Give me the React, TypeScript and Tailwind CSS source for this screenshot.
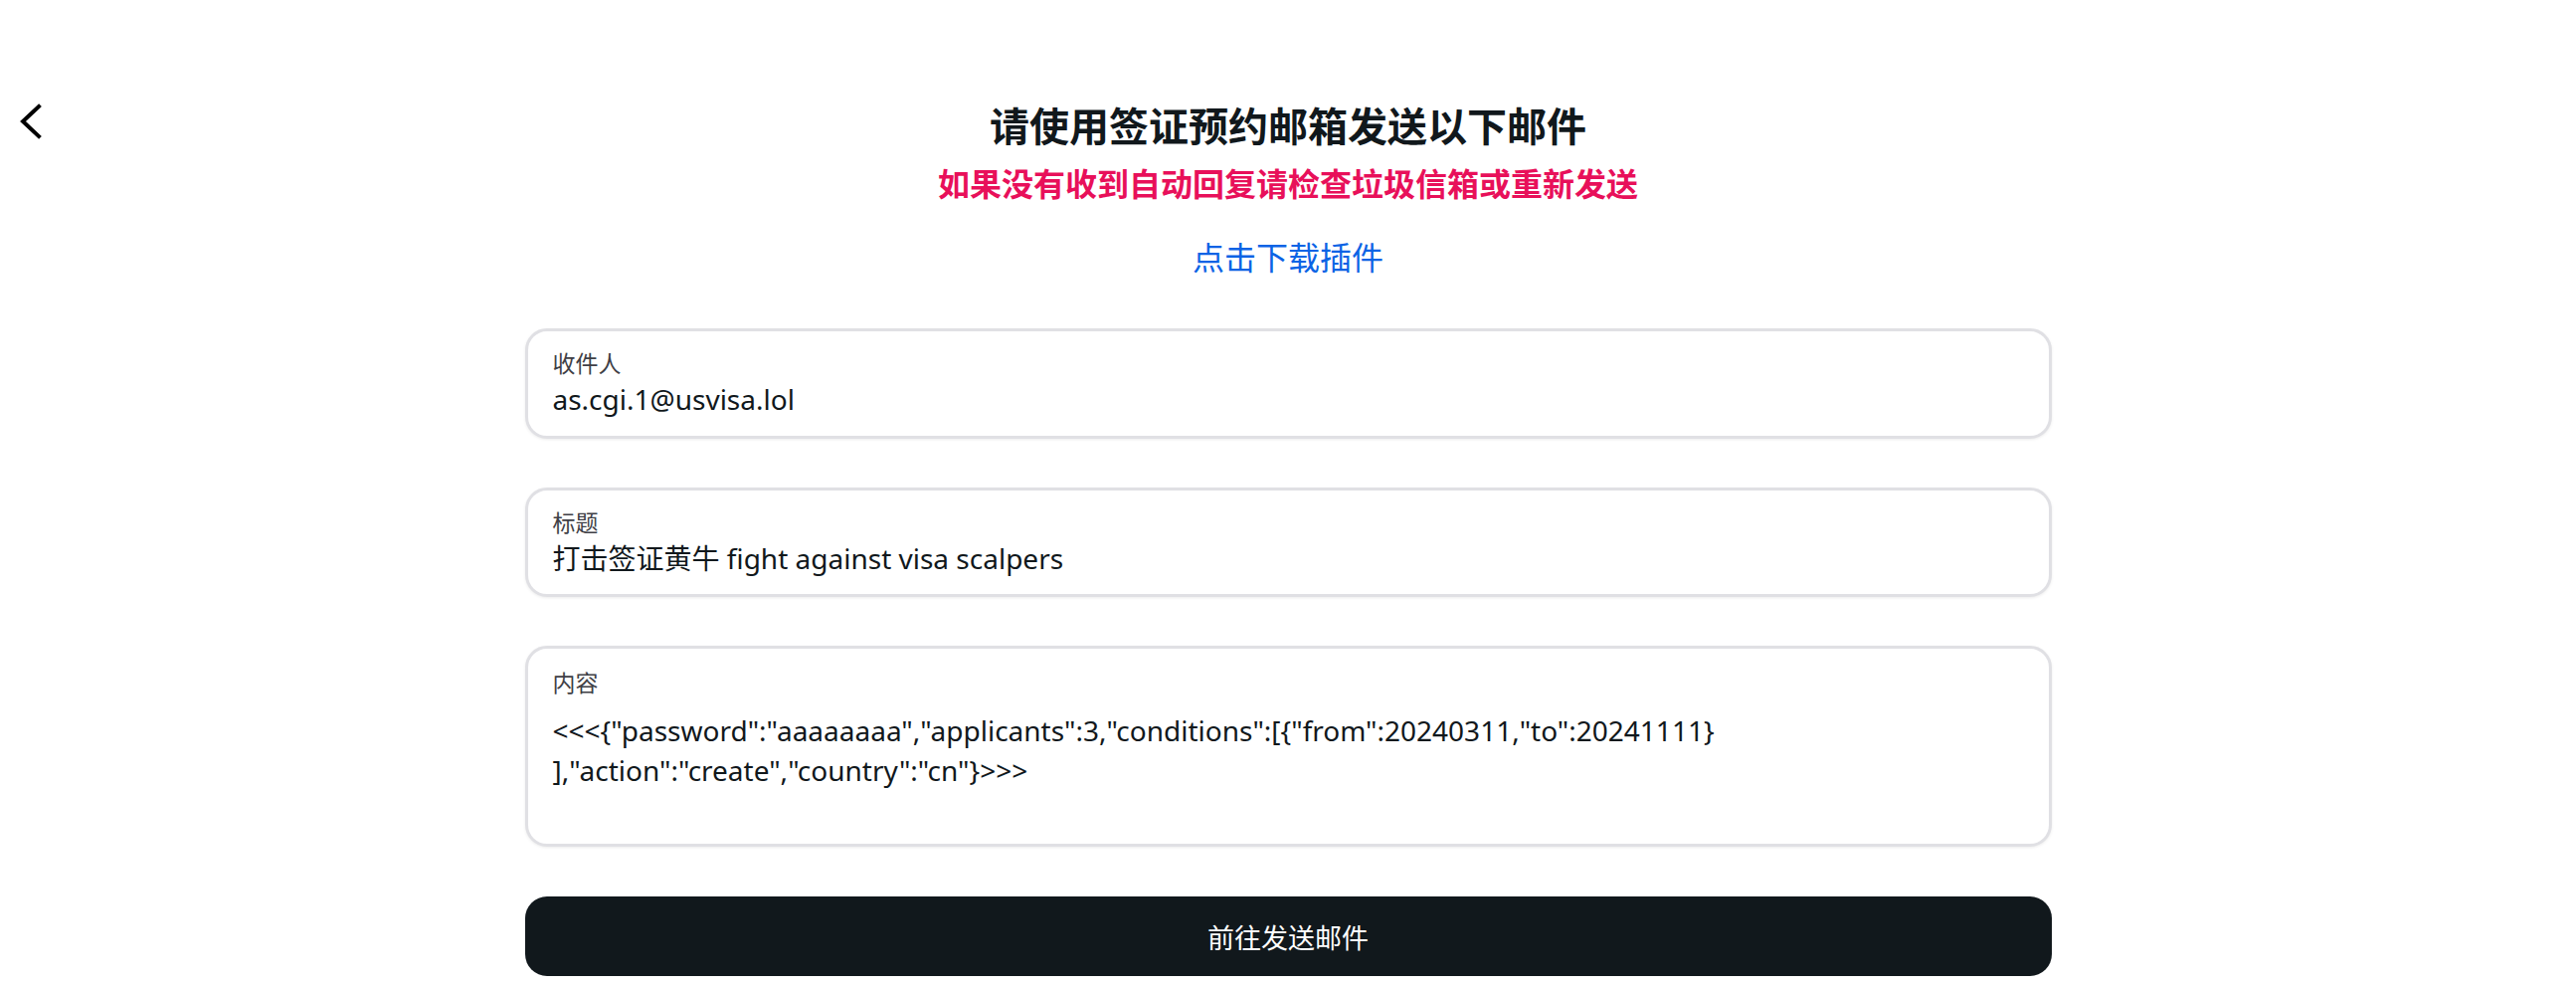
import React from "react";

interface FieldProps {
  children: React.ReactNode;
  className?: string;
}

const font = "font-['Noto_Sans','Noto_Sans_CJK_SC',sans-serif]";

// рамка поля ввода
const Field = ({ children, className }: FieldProps) => {
  return (
    <div
      className={
        "w-full rounded-[22px] border-[3px] border-[#e0e0e4] bg-white pl-[25px] pr-[25px] shadow-[0_1px_3px_rgba(0,0,0,0.08)] " +
        (className ?? "")
      }
    >
      {children}
    </div>
  );
};

const App = () => {
  const content1 =
    '<<<{"password":"aaaaaaaa","applicants":3,"conditions":[{"from":20240311,"to":20241111}';
  const content2 = '],"action":"create","country":"cn"}>>>';

  return (
    <div className={"relative min-h-[992px] w-full bg-white " + font}>
      {/* кнопка назад */}
      <button className="absolute left-[16px] top-[100px] h-[44px] w-[28px]">
        <svg viewBox="0 0 28 44" width="28" height="44" fill="none">
          <path
            d="M23 7 L7 22 L23 37"
            stroke="#000"
            strokeWidth="4"
            strokeLinecap="square"
          />
        </svg>
      </button>

      <div className="flex flex-col items-center pt-[99px]">
        {/* заголовки */}
        <h1 className="text-[40px] font-bold leading-[56px] text-[#11181c]">
          请使用签证预约邮箱发送以下邮件
        </h1>
        <p className="mt-[6px] text-[32px] font-bold leading-[48px] text-[#e8105a]">
          如果没有收到自动回复请检查垃圾信箱或重新发送
        </p>
        <a className="mt-[28px] cursor-pointer text-[32px] leading-[44px] text-[#0b63e5]">
          点击下载插件
        </a>

        {/* форма */}
        <div className="mt-[49px] flex w-[1535px] flex-col gap-[49px]">
          <Field className="pt-[17px] pb-[19px]">
            <div className="text-[23px] leading-[30px] text-[#3f3f46]">收件人</div>
            <div className="mt-[3px] text-[28px] leading-[36px] text-[#11181c]">
              as.cgi.1@usvisa.lol
            </div>
          </Field>

          <Field className="pt-[17px] pb-[18px]">
            <div className="text-[23px] leading-[30px] text-[#3f3f46]">标题</div>
            <div className="mt-[3px] text-[28px] leading-[36px] text-[#11181c]">
              打击签证黄牛 fight against visa scalpers
            </div>
          </Field>

          <Field className="pt-[19px] pb-[54px]">
            <div className="text-[23px] leading-[30px] text-[#3f3f46]">内容</div>
            <div className="mt-[13px] text-[28px] leading-[40px] text-[#11181c]">
              <div>{content1}</div>
              <div>{content2}</div>
            </div>
          </Field>

          <button className="mt-[1px] h-[80px] w-full rounded-[22px] bg-[#11181c] pt-[5px] text-[27px] text-white">
            前往发送邮件
          </button>
        </div>
      </div>
    </div>
  );
};

export default App;
